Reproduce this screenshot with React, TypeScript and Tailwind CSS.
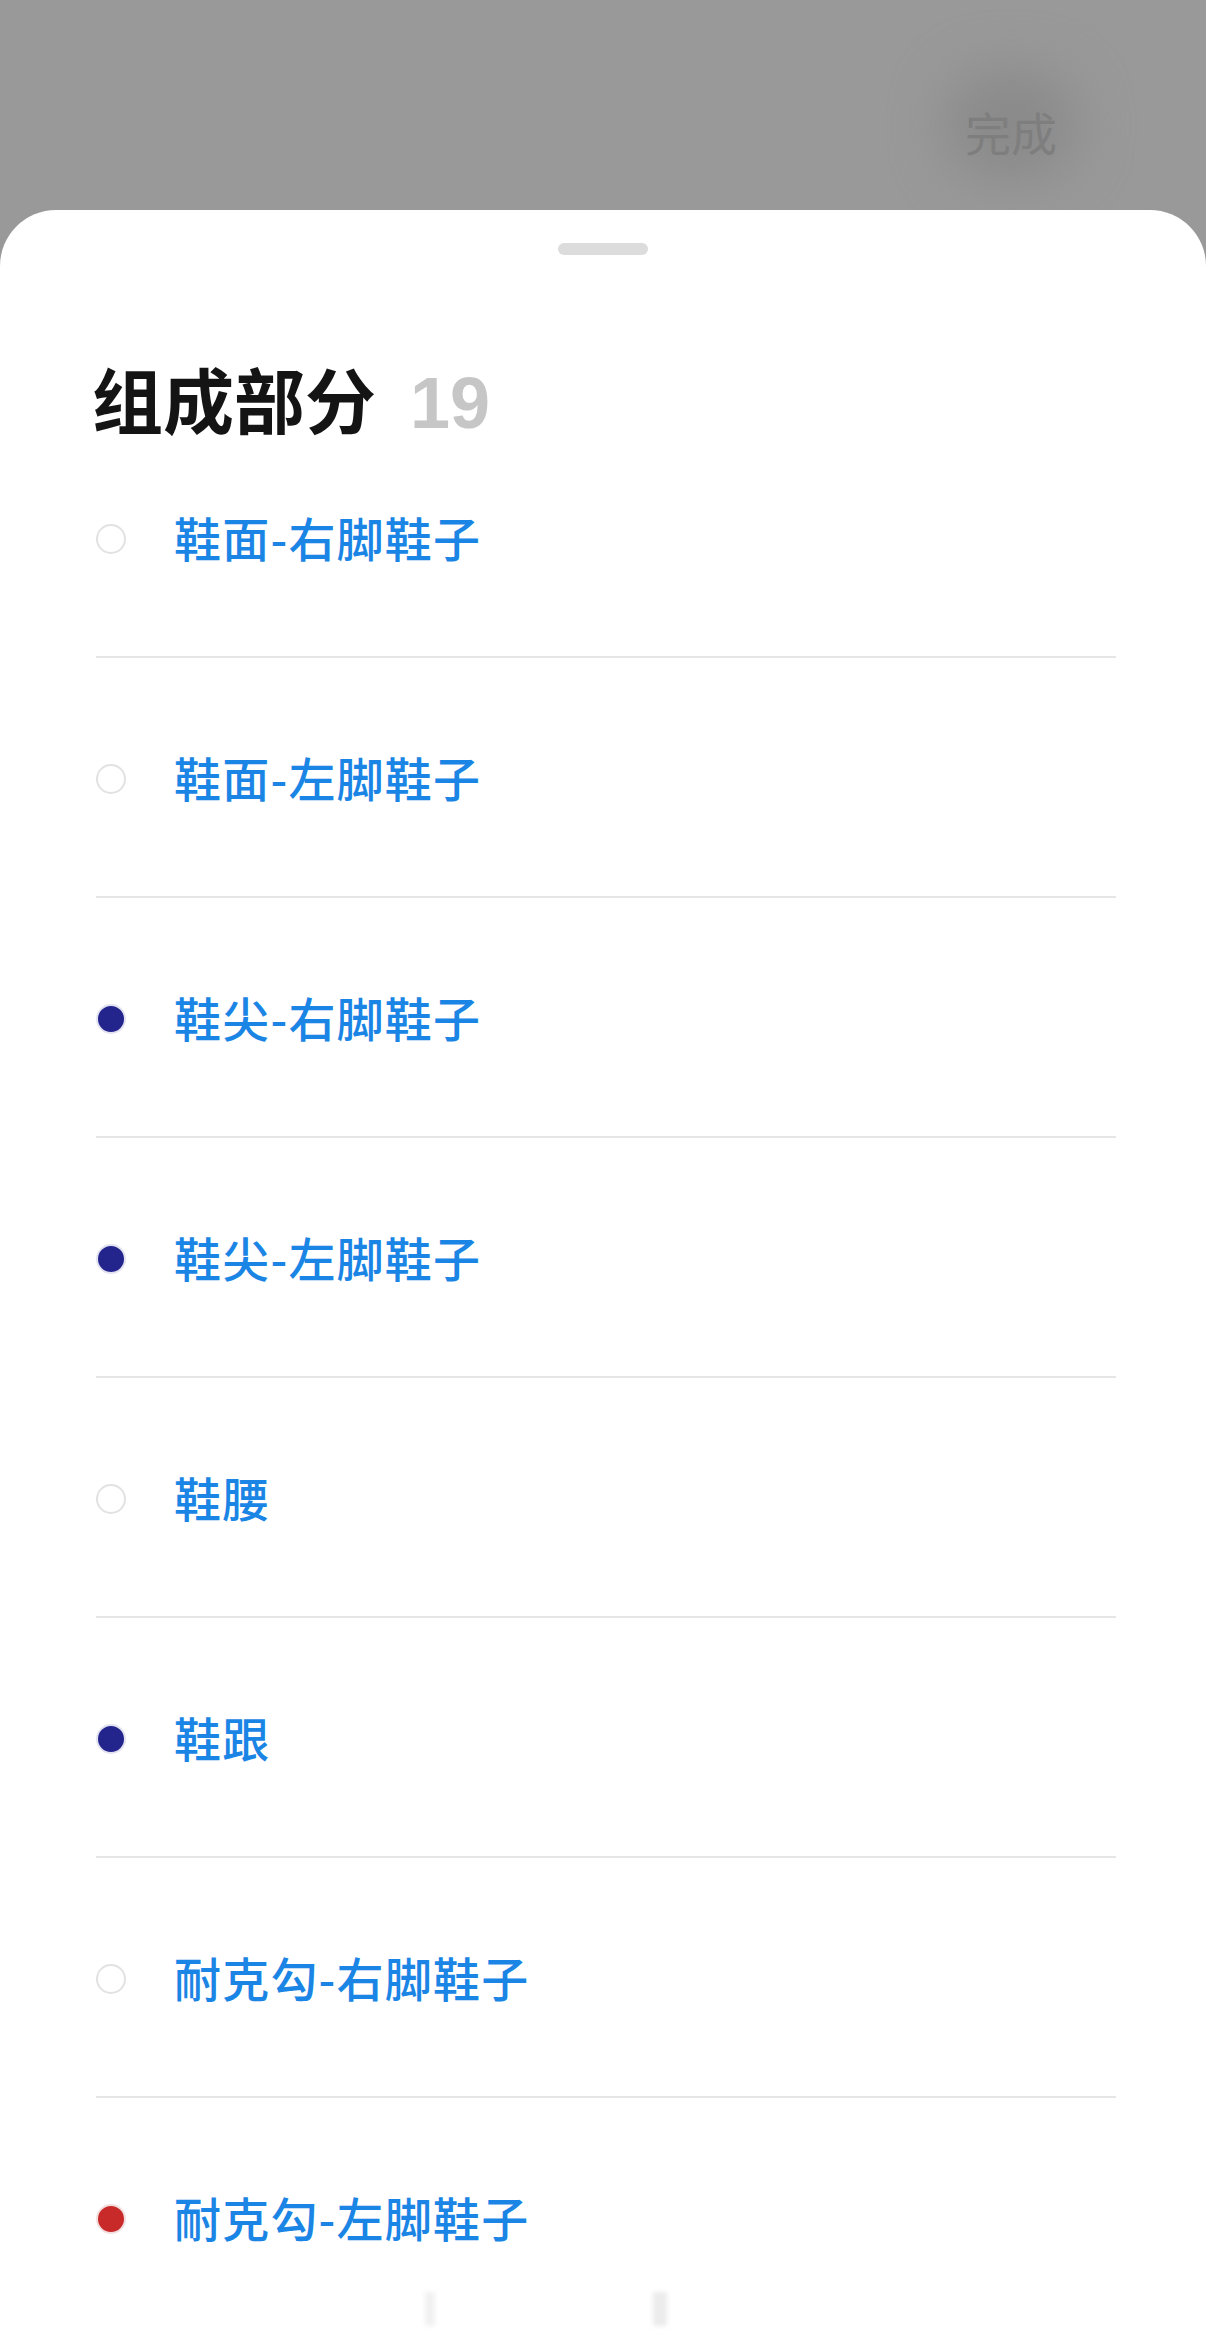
import React from "react";

type Item = { label: string; dot: "none" | "navy" | "red" };

const items: Item[] = [
  { label: "鞋面-右脚鞋子", dot: "none" },
  { label: "鞋面-左脚鞋子", dot: "none" },
  { label: "鞋尖-右脚鞋子", dot: "navy" },
  { label: "鞋尖-左脚鞋子", dot: "navy" },
  { label: "鞋腰", dot: "none" },
  { label: "鞋跟", dot: "navy" },
  { label: "耐克勾-右脚鞋子", dot: "none" },
  { label: "耐克勾-左脚鞋子", dot: "red" },
];

function Dot({ kind }: { kind: Item["dot"] }) {
  if (kind === "none") {
    return <div className="mt-[4px] w-[30px] h-[30px] rounded-full border-[2px] border-[#e2e2e2] bg-white shrink-0" />;
  }
  if (kind === "navy") {
    return (
      <div className="mt-[4px] w-[30px] h-[30px] rounded-full border-[2px] border-[#e2e2f0] bg-[#23248c] shrink-0" />
    );
  }
  return <div className="mt-[4px] w-[30px] h-[30px] rounded-full border-[2px] border-[#f2dede] bg-[#c82a2a] shrink-0" />;
}

export default function App() {
  return (
    <div
      className="relative w-[1206px] h-[2334px] overflow-hidden bg-[#999999]"
      style={{ fontFamily: '"Noto Sans CJK SC", "Noto Sans", sans-serif' }}
    >
      {/* top dimmed header */}
      <div className="h-[210px] flex justify-end items-start pr-[148px] pt-[84px]">
        <div className="relative w-[94px] h-[94px] flex items-center justify-center">
          <div className="absolute left-[-20px] top-[-14px] w-[134px] h-[110px] rounded-full bg-[#8a8a8a] blur-[26px]" />
          <span className="relative text-[46px] leading-[46px] text-[#7e7e7e]">完成</span>
        </div>
      </div>

      {/* sheet */}
      <div className="relative bg-white rounded-t-[56px] h-[2124px]">
        <div className="flex justify-center pt-[33px]">
          <div className="w-[90px] h-[12px] rounded-full bg-[#dcdcdc]" />
        </div>
        <div className="pl-[92px] pt-[124px] h-[163px]">
          <div className="flex items-baseline leading-[36px]">
            <span className="text-[71px] font-bold text-[#141414]">组成部分</span>
            <span
              className="ml-[34px] text-[72px] font-bold text-[#c6c6c6]"
              style={{ fontFamily: '"Liberation Sans", Arial, sans-serif' }}
            >
              19
            </span>
          </div>
        </div>
        <div className="pl-[96px] pr-[90px]">
          {items.map((it) => (
            <div key={it.label} className="h-[240px] flex items-center border-b-[2px] border-[#e6e6e6]">
              <Dot kind={it.dot} />
              <span className="ml-[48px] text-[47px] leading-[46px] font-medium tracking-[1.2px] text-[#1b85e5]">
                {it.label}
              </span>
            </div>
          ))}
        </div>

        {/* faint bottom smudges */}
        <div className="absolute left-[425px] top-[2082px] w-[10px] h-[34px] bg-[#f1f1f1] blur-[2px]" />
        <div className="absolute left-[653px] top-[2082px] w-[14px] h-[34px] bg-[#ececec] blur-[2px]" />
      </div>
    </div>
  );
}
